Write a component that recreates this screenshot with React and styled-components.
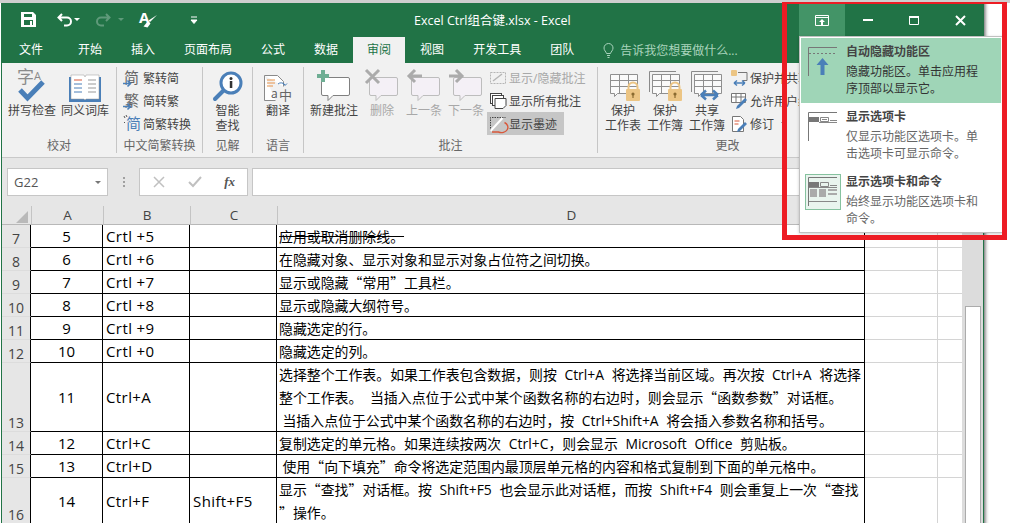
import React from "react";
import styled, { createGlobalStyle } from "styled-components";

const UI_FONT = `"Open Sans", "Noto Sans CJK SC", sans-serif`;
const GREEN = "#217346";
const BLUE = "#4a7fb8";

const tabs = ["开始", "插入", "页面布局", "公式", "数据", "审阅", "视图", "开发工具", "团队"];

const rows = [
  { no: 7, a: "5", b: "Crtl +5", d: ["应用或取消删除线。"], strike: true },
  { no: 8, a: "6", b: "Crtl +6", d: ["在隐藏对象、显示对象和显示对象占位符之间切换。"] },
  { no: 9, a: "7", b: "Crtl +7", d: ["显示或隐藏“常用”工具栏。"] },
  { no: 10, a: "8", b: "Crtl +8", d: ["显示或隐藏大纲符号。"] },
  { no: 11, a: "9", b: "Crtl +9", d: ["隐藏选定的行。"] },
  { no: 12, a: "10", b: "Crtl +0", d: ["隐藏选定的列。"] },
  {
    no: 13,
    a: "11",
    b: "Ctrl+A",
    d: [
      "选择整个工作表。如果工作表包含数据，则按 Ctrl+A 将选择当前区域。再次按 Ctrl+A 将选择",
      "整个工作表。 当插入点位于公式中某个函数名称的右边时，则会显示“函数参数”对话框。",
      "\u2005当插入点位于公式中某个函数名称的右边时，按 Ctrl+Shift+A 将会插入参数名称和括号。",
    ],
  },
  { no: 14, a: "12", b: "Ctrl+C", d: ["复制选定的单元格。如果连续按两次 Ctrl+C，则会显示 Microsoft Office 剪贴板。"] },
  { no: 15, a: "13", b: "Ctrl+D", d: ["\u2005使用“向下填充”命令将选定范围内最顶层单元格的内容和格式复制到下面的单元格中。"] },
  {
    no: 16,
    a: "14",
    b: "Ctrl+F",
    c: "Shift+F5",
    d: ["显示“查找”对话框。按 Shift+F5 也会显示此对话框，而按 Shift+F4 则会重复上一次“查找", "”操作。"],
  },
];

// curly quotes are full width in the sheet, Open Sans would draw them narrow
const withQuotes = (line) =>
  line.split(/([“”])/).map((part, i) => (part === "“" || part === "”" ? <Quote key={i}>{part}</Quote> : part));

const Bubble = ({ fill, stroke, children }) => (
  <svg width="36" height="34" viewBox="0 0 36 34">
    <path
      d="M7 9.5h25a1.5 1.5 0 0 1 1.5 1.5v15a1.5 1.5 0 0 1-1.5 1.5H17l-5 5v-5H7A1.5 1.5 0 0 1 5.5 26V11A1.5 1.5 0 0 1 7 9.5z"
      fill={fill}
      stroke={stroke}
      strokeWidth="1"
    />
    {children}
  </svg>
);

const Sheet3 = ({ children, back }) => (
  <svg width="38" height="34" viewBox="0 0 38 34">
    {back && <path d="M3.5 24V3.5H30" fill="none" stroke="#8a8a8a" />}
    <path
      d="M6.5 6.5h27v19h-20l-3 3v-3h-4zM6.5 12.5h27M6.5 18.5h27M15.5 6.5v19M24.5 6.5v19"
      fill="#fafafa"
      stroke="#8f8f8f"
    />
    {children}
  </svg>
);

const Lock = () => (
  <g>
    <path d="M24.5 22v-3a4.5 4.5 0 0 1 9 0v3" fill="none" stroke="#ecc584" strokeWidth="2" />
    <rect x="22" y="21" width="14" height="12" rx="1" fill="#ecc584" />
    <circle cx="29" cy="26" r="1.6" fill="#8a6a30" />
    <rect x="28.4" y="26" width="1.2" height="4" fill="#8a6a30" />
  </g>
);

const RibbonGlyph = ({ ch, color, arrow, left }) => (
  <svg width="18" height="20" viewBox="0 0 18 20">
    <text x={left ? 3 : 1} y="15" fontSize="15" fill={color} fontFamily="Noto Sans CJK SC">
      {ch}
    </text>
    {arrow && <path d="M0 15.5h7M4.5 12.5l3 3-3 3" fill="none" stroke={BLUE} strokeWidth="1.6" />}
    {left && <path d="M1 2l1 2M3 1l1 2M1 8l1 1" stroke="#555" strokeWidth="1" />}
  </svg>
);

const CommentSmall = ({ kind }) => (
  <svg width="18" height="18" viewBox="0 0 18 18">
    {kind === "toggle" && (
      <g fill="none">
        <rect x="1.5" y="3.5" width="15" height="11" stroke="#b5b5b5" strokeDasharray="2 1" />
        <path d="M4 12l9-7" stroke="#b5b5b5" strokeWidth="1.4" />
      </g>
    )}
    {kind === "all" && (
      <g fill="#fff" stroke="#444">
        <rect x="1.5" y="1.5" width="11" height="10" />
        <rect x="3.5" y="3.5" width="11" height="10" />
        <path d="M6 6.5h11v7l-3 3H6z" />
      </g>
    )}
    {kind === "ink" && (
      <g fill="none">
        <path d="M1.5 16V2.5h15" stroke="#444" strokeDasharray="1.5 1" />
        <path d="M1.5 16l12-13" stroke="#fff" strokeWidth="2" />
        <path d="M15.5 7.5a6 5 0 1 1-6 9.5H3" stroke="#d9583b" strokeWidth="1.4" />
      </g>
    )}
  </svg>
);

const App = () => (
  <Page>
    <GlobalStyle />
    <TopStrip />
    <Body>
      <Window>
        <TitleBar>
          <Qat>
            <QatSlot $w={27} $ml={13}>
              <svg width="15" height="15" viewBox="0 0 15 15">
                <path d="M0 0h12l3 3v12H0z" fill="#fff" />
                <rect x="3" y="2" width="8" height="3" fill={GREEN} />
                <rect x="3" y="8" width="9" height="5" fill={GREEN} />
                <rect x="9" y="9" width="2" height="4" fill="#fff" />
              </svg>
            </QatSlot>
            <QatSlot $w={16} $ml={15}>
              <svg width="16" height="14" viewBox="0 0 16 14">
                <path d="M5 1L1.5 4.5 5 8M2 4.5h8a4 4 0 0 1 0 8H7" fill="none" stroke="#fff" strokeWidth="2" />
              </svg>
            </QatSlot>
            <Caret $color="#fff" $ml={1} />
            <QatSlot $w={16} $ml={15}>
              <svg width="16" height="14" viewBox="0 0 16 14">
                <path d="M11 1l3.5 3.5L11 8M14 4.5H6a4 4 0 0 0 0 8h3" fill="none" stroke="#5f9a7a" strokeWidth="2" />
              </svg>
            </QatSlot>
            <Caret $color="#5f9a7a" $ml={7} />
            <QatSlot $w={18} $ml={15}>
              <svg width="18" height="17" viewBox="0 0 18 17">
                <text x="0" y="12" fontSize="15" fontWeight="bold" fill="#fff" fontFamily="Open Sans">
                  A
                </text>
                <path d="M18 4l-7 7-1.500-1.500z" fill="#fff" />
                <path d="M9 10l2.500 2.500-3 4-4-1z" fill="#fff" />
              </svg>
            </QatSlot>
            <QatSlot $w={8} $ml={33}>
              <svg width="8" height="8" viewBox="0 0 8 8">
                <path d="M1 1h6M1 4h6L4 7.5z" fill="#fff" stroke="#fff" />
              </svg>
            </QatSlot>
          </Qat>
          <WindowButtons>
            <WinButton $active>
              <svg width="14" height="11" viewBox="0 0 14 11">
                <path d="M.5 .5h13v10H.5zM.5 2.5h13" fill="none" stroke="#fff" />
                <path d="M7 4l-3 3h2v3h2V7h2z" fill="#fff" />
              </svg>
            </WinButton>
            <WinButton>
              <svg width="10" height="2" viewBox="0 0 10 2">
                <rect width="10" height="2" fill="#fff" />
              </svg>
            </WinButton>
            <WinButton>
              <svg width="10" height="9" viewBox="0 0 10 9">
                <path d="M.5 .5h9v8h-9z" fill="none" stroke="#fff" />
                <rect width="10" height="2" fill="#fff" />
              </svg>
            </WinButton>
            <WinButton>
              <svg width="11" height="11" viewBox="0 0 11 11">
                <path d="M1 1l9 9M10 1l-9 9" stroke="#fff" strokeWidth="2" />
              </svg>
            </WinButton>
          </WindowButtons>
          <Title>Excel Ctrl组合键.xlsx - Excel</Title>
        </TitleBar>

        <TabBar>
          <FileTab>文件</FileTab>
          {tabs.map((tab) => (
            <Tab key={tab} $active={tab === "审阅"}>
              {tab}
            </Tab>
          ))}
          <TellMe>
            <svg width="11" height="15" viewBox="0 0 11 15">
              <path
                d="M3.5 10.5C3 8.5 1 7.500 1 5a4.500 4.500 0 0 1 9 0c0 2.500-2 3.500-2.500 5.500zM4 12.500h3M4.500 14.500h2"
                fill="none"
                stroke="#a9d3bc"
              />
            </svg>
            告诉我您想要做什么...
          </TellMe>
        </TabBar>

        <Ribbon>
          <Group $w={115}>
            <GroupBody $pl={2}>
              <BigButton $w={56}>
                <IconBox>
                  <svg width="30" height="34" viewBox="0 0 30 34">
                    <text x="0" y="15" fontSize="17" fill="#8a8a8a" fontFamily="Noto Sans CJK SC">
                      字
                    </text>
                    <text x="17" y="12" fontSize="11" fill="#8a8a8a" fontFamily="Open Sans">
                      A
                    </text>
                    <path d="M3 22l7.500 8L26 14" fill="none" stroke={BLUE} strokeWidth="5" />
                  </svg>
                </IconBox>
                <Label>拼写检查</Label>
              </BigButton>
              <BigButton $w={50}>
                <IconBox>
                  <svg width="32" height="30" viewBox="0 0 32 30">
                    <path d="M0 5h32v25H0z" fill={BLUE} />
                    <path d="M2 3h13l1 2 1-2h13v24H17l-1 1-1-1H2z" fill="#fff" stroke="#999" strokeWidth=".5" />
                    <path d="M5 8h8" stroke="#d9583b" />
                    <path d="M5 12h8M5 16h8M5 20h8" stroke={BLUE} />
                    <path d="M19 8h8M19 12h8M19 16h8M19 20h8" stroke="#999" />
                  </svg>
                </IconBox>
                <Label>同义词库</Label>
              </BigButton>
            </GroupBody>
            <GroupName>校对</GroupName>
          </Group>

          <Group $w={86}>
            <SmallColumn $pl={4}>
              <SmallRow>
                <RibbonGlyph ch="简" color="#666" arrow />
                繁转简
              </SmallRow>
              <SmallRow>
                <RibbonGlyph ch="繁" color="#666" arrow />
                简转繁
              </SmallRow>
              <SmallRow>
                <RibbonGlyph ch="简" color={BLUE} left />
                简繁转换
              </SmallRow>
            </SmallColumn>
            <GroupName>中文简繁转换</GroupName>
          </Group>

          <Group $w={50}>
            <GroupBody>
              <BigButton $w={49}>
                <IconBox>
                  <svg width="32" height="32" viewBox="0 0 32 32">
                    <circle cx="19" cy="13" r="10" fill="#fff" stroke={BLUE} strokeWidth="3" />
                    <path d="M11 21L3 29" stroke={BLUE} strokeWidth="4" strokeLinecap="round" />
                    <circle cx="19" cy="8.500" r="1.500" fill="#333" />
                    <rect x="17.800" y="11" width="2.500" height="7" fill="#333" />
                  </svg>
                </IconBox>
                <Label>智能</Label>
                <Label>查找</Label>
              </BigButton>
            </GroupBody>
            <GroupName>见解</GroupName>
          </Group>

          <Group $w={51}>
            <GroupBody>
              <BigButton $w={50}>
                <IconBox>
                  <svg width="30" height="32" viewBox="0 0 30 32">
                    <path d="M1.500 5.500h13l6 6v5M1.500 5.500v25h11" fill="#fff" stroke="#8a8a8a" />
                    <path d="M4 10h8M4 13h8M4 16h6" stroke="#e8934a" />
                    <path d="M15 14a4 3 0 0 1 7 1M20 13.500l2 2 2-2" fill="none" stroke={BLUE} />
                    <text x="8" y="28" fontSize="12" fill="#555" fontFamily="Open Sans">
                      a
                    </text>
                    <text x="16" y="30" fontSize="13" fill="#666" fontFamily="Noto Sans CJK SC">
                      中
                    </text>
                  </svg>
                </IconBox>
                <Label>翻译</Label>
              </BigButton>
            </GroupBody>
            <GroupName>语言</GroupName>
          </Group>

          <Group $w={294}>
            <GroupBody $pl={3}>
              <BigButton $w={54}>
                <IconBox>
                  <Bubble fill="#fff" stroke="#808080">
                    <path d="M7 2v12M1 8h12" stroke="#6fae94" strokeWidth="4" />
                  </Bubble>
                </IconBox>
                <Label>新建批注</Label>
              </BigButton>
              <BigButton $w={42}>
                <IconBox>
                  <Bubble fill="#f4f0f6" stroke="#bdbdbd">
                    <path d="M2 2l13 13M15 2L2 15" stroke="#ababab" strokeWidth="3" />
                  </Bubble>
                </IconBox>
                <Label $muted>删除</Label>
              </BigButton>
              <BigButton $w={42}>
                <IconBox>
                  <Bubble fill="#f4f0f6" stroke="#bdbdbd">
                    <path d="M16 8H4M9 2L3 8l6 6" fill="none" stroke="#ababab" strokeWidth="3" />
                  </Bubble>
                </IconBox>
                <Label $muted>上一条</Label>
              </BigButton>
              <BigButton $w={42}>
                <IconBox>
                  <Bubble fill="#f4f0f6" stroke="#bdbdbd">
                    <path d="M1 8h12M8 2l6 6-6 6" fill="none" stroke="#ababab" strokeWidth="3" />
                  </Bubble>
                </IconBox>
                <Label $muted>下一条</Label>
              </BigButton>
              <SmallColumn $pl={0}>
                <SmallRow $muted>
                  <CommentSmall kind="toggle" />
                  显示/隐藏批注
                </SmallRow>
                <SmallRow>
                  <CommentSmall kind="all" />
                  显示所有批注
                </SmallRow>
                <SmallRow $on>
                  <CommentSmall kind="ink" />
                  显示墨迹
                </SmallRow>
              </SmallColumn>
            </GroupBody>
            <GroupName>批注</GroupName>
          </Group>

          <Group $w={259} $last>
            <GroupBody $pl={4}>
              <BigButton $w={42}>
                <IconBox>
                  <Sheet3>
                    <Lock />
                  </Sheet3>
                </IconBox>
                <Label>保护</Label>
                <Label>工作表</Label>
              </BigButton>
              <BigButton $w={42}>
                <IconBox>
                  <Sheet3 back>
                    <Lock />
                  </Sheet3>
                </IconBox>
                <Label>保护</Label>
                <Label>工作簿</Label>
              </BigButton>
              <BigButton $w={42}>
                <IconBox>
                  <Sheet3 back>
                    <path d="M13 27h17M13 27l5-4.500M13 27l5 4.500M30 27l-5-4.500M30 27l-5 4.500" stroke={BLUE} strokeWidth="2.500" fill="none" />
                  </Sheet3>
                </IconBox>
                <Label>共享</Label>
                <Label>工作簿</Label>
              </BigButton>
              <SmallColumn $pl={0}>
                <SmallRow>
                  <svg width="18" height="18" viewBox="0 0 18 18">
                    <rect x="1" y="1" width="6" height="6" rx="1" fill="#ecc584" />
                    <path d="M8 3.500h9v8h-4" fill="none" stroke="#777" />
                    <path d="M4 14h11M4 14l3-2.500M4 14l3 2.500M15 14l-3-2.500M15 14l-3 2.500" stroke={BLUE} strokeWidth="1.500" fill="none" />
                  </svg>
                  保护并共享工作簿
                </SmallRow>
                <SmallRow>
                  <svg width="18" height="18" viewBox="0 0 18 18">
                    <path d="M1.500 1.500h14v9h-14zM1.500 5h14M6 1.500v9M11 1.500v9" fill="#fff" stroke="#777" />
                    <path d="M6 17l1-3 8-8 2 2-8 8z" fill={BLUE} />
                  </svg>
                  允许用户编辑区域
                </SmallRow>
                <SmallRow>
                  <svg width="18" height="18" viewBox="0 0 18 18">
                    <path d="M2.500 1.500h8l3 3v12h-11z" fill="#fff" stroke="#777" />
                    <path d="M4.500 6h5M4.500 9h4" stroke="#d9583b" />
                    <path d="M7 17l1-3 7-7 2 2-7 7z" fill={BLUE} />
                  </svg>
                  修订
                  <Caret $color="#666" $ml={5} />
                </SmallRow>
              </SmallColumn>
            </GroupBody>
            <GroupName>更改</GroupName>
          </Group>
        </Ribbon>

        <FormulaBar>
          <NameBox>
            G22
            <Caret $color="#777" $ml={0} />
          </NameBox>
          <Grip>
            <i />
            <i />
            <i />
          </Grip>
          <FormulaTools>
            <svg width="12" height="12" viewBox="0 0 12 12">
              <path d="M1 1l10 10M11 1L1 11" stroke="#c0c0c0" strokeWidth="1.500" />
            </svg>
            <svg width="14" height="12" viewBox="0 0 14 12">
              <path d="M1 6l4 4 8-9" fill="none" stroke="#c0c0c0" strokeWidth="2" />
            </svg>
            <FxMark>fx</FxMark>
          </FormulaTools>
          <FormulaInput />
        </FormulaBar>

        <SheetArea>
          <Grid>
            <Sheet>
              <colgroup>
                <col width="29" />
                <col width="72" />
                <col width="87" />
                <col width="87" />
                <col width="588" />
                <col width="73" />
                <col width="25" />
              </colgroup>
              <thead>
                <tr>
                  <Corner>
                    <Triangle />
                  </Corner>
                  {["A", "B", "C", "D", "", ""].map((col, i) => (
                    <ColHead key={i}>{col}</ColHead>
                  ))}
                </tr>
              </thead>
              <tbody>
                {rows.map((row) => (
                  <tr key={row.no}>
                    <RowHead>{row.no}</RowHead>
                    <NumCell>{row.a}</NumCell>
                    <KeyCell>{row.b}</KeyCell>
                    <KeyCell>{row.c}</KeyCell>
                    <TextCell $strike={row.strike}>
                      {row.d.map((line) => (
                        <div key={line}>{withQuotes(line)}</div>
                      ))}
                    </TextCell>
                    <EmptyCell />
                    <EmptyCell />
                  </tr>
                ))}
              </tbody>
            </Sheet>
          </Grid>
          <ScrollBar>
            <ScrollThumb />
          </ScrollBar>
        </SheetArea>
      </Window>
      <Desktop />
    </Body>

    <Menu>
      <MenuItem $on>
        <MenuIcon>
          <svg width="30" height="30" viewBox="0 0 30 30">
            <path d="M.5 29V.5H29" fill="none" stroke="#777" />
            <path d="M1 6.500h28" stroke="#777" strokeDasharray="2 2" />
            <path d="M14.500 11l-6 7h4v10h4V18h4z" fill={BLUE} />
          </svg>
        </MenuIcon>
        <MenuText>
          <MenuTitle>自动隐藏功能区</MenuTitle>
          <MenuDesc $on>
            隐藏功能区。单击应用程
            <br />
            序顶部以显示它。
          </MenuDesc>
        </MenuText>
      </MenuItem>
      <MenuItem>
        <MenuIcon>
          <svg width="30" height="30" viewBox="0 0 30 30">
            <path d="M.5 29V.5H29" fill="none" stroke="#777" />
            <rect x="1" y="5" width="10" height="5" fill="#777" />
            <path d="M12.500 5.500h8v4h-8zM22 8.500h7M14 7.500h5" fill="none" stroke="#888" />
            <path d="M11 10.500h18" stroke="#888" />
          </svg>
        </MenuIcon>
        <MenuText>
          <MenuTitle>显示选项卡</MenuTitle>
          <MenuDesc>
            仅显示功能区选项卡。单
            <br />
            击选项卡可显示命令。
          </MenuDesc>
        </MenuText>
      </MenuItem>
      <MenuItem>
        <MenuIcon $framed>
          <svg width="30" height="30" viewBox="0 0 30 30">
            <path d="M.5 29V.5H29" fill="none" stroke="#777" />
            <rect x="1" y="5" width="10" height="5" fill="#777" />
            <path d="M12.500 5.500h8v4h-8zM22 8.500h7M1 10.500h28M1 24.500h28" fill="none" stroke="#888" />
            <path d="M2 12h7v8H2zM11 12h7v8h-7zM20 12h9v2h-9zM20 16h9v2h-9z" fill="#aaa" />
          </svg>
        </MenuIcon>
        <MenuText>
          <MenuTitle>显示选项卡和命令</MenuTitle>
          <MenuDesc>
            始终显示功能区选项卡和
            <br />
            命令。
          </MenuDesc>
        </MenuText>
      </MenuItem>
    </Menu>
    <RedFrame />
  </Page>
);

const GlobalStyle = createGlobalStyle`
  html, body {
    margin: 0;
    padding: 0;
    overflow: hidden;
    background: #fff;
    font-family: ${UI_FONT};
  }
  svg {
    overflow: visible;
  }
`;

const Page = styled.div`
  position: relative;
  width: 1010px;
  height: 523px;
  overflow: hidden;
  display: flex;
  flex-direction: column;
`;

const TopStrip = styled.div`
  height: 3px;
  flex: none;
  background: #cfcfcf;
`;

const Body = styled.div`
  flex: 1;
  min-height: 0;
  display: flex;
  padding-left: 1px;
`;

const Window = styled.div`
  width: 983px;
  flex: none;
  box-sizing: border-box;
  display: flex;
  flex-direction: column;
  border-left: 1px solid ${GREEN};
  border-right: 1px solid ${GREEN};
  background: #fff;
`;

const Desktop = styled.div`
  flex: 1;
  background:
    linear-gradient(90deg, #8a8a8a, #e8e8e8 3px, #fff 5px) no-repeat 0 0 / 6px 100%,
    linear-gradient(#2f9c8c, #2f9c8c) no-repeat 2px 261px / 3px 6px,
    linear-gradient(#e8934a, #e8934a) no-repeat 3px 298px / 2px 5px,
    linear-gradient(#222, #222) no-repeat 1px 418px / 4px 14px,
    #fff;
`;

const TitleBar = styled.div`
  position: relative;
  height: 33px;
  flex: none;
  display: flex;
  align-items: stretch;
  justify-content: space-between;
  background: ${GREEN};
`;

const Qat = styled.div`
  display: flex;
  align-items: center;
`;

const QatSlot = styled.div`
  width: ${(p) => p.$w}px;
  margin-left: ${(p) => p.$ml}px;
  display: flex;
  justify-content: center;
`;

const Caret = styled.span`
  display: inline-block;
  width: 0;
  height: 0;
  margin-left: ${(p) => p.$ml}px;
  border-left: 3px solid transparent;
  border-right: 3px solid transparent;
  border-top: 3px solid ${(p) => p.$color};
`;

const Title = styled.div`
  position: absolute;
  left: 412px;
  top: 9px;
  font-size: 12.5px;
  line-height: 17px;
  color: #fff;
  white-space: nowrap;
`;

const WindowButtons = styled.div`
  display: flex;
  padding-top: 1px;
`;

const WinButton = styled.div`
  width: 46px;
  display: flex;
  align-items: center;
  justify-content: center;
  background: ${(p) => (p.$active ? "#439467" : "transparent")};
`;

const TabBar = styled.div`
  height: 27px;
  flex: none;
  display: flex;
  align-items: flex-end;
  gap: 1px;
  background: ${GREEN};
  font-size: 12px;
`;

const Tab = styled.div`
  height: 26px;
  padding: 0 14px;
  line-height: 25px;
  white-space: nowrap;
  color: ${(p) => (p.$active ? GREEN : "#fff")};
  background: ${(p) => (p.$active ? "#f1f1f1" : "transparent")};
`;

const FileTab = styled(Tab)`
  padding: 0 20px 0 17px;
`;

const TellMe = styled.div`
  height: 26px;
  margin-left: 14px;
  display: flex;
  align-items: center;
  gap: 6px;
  color: #a9d3bc;
  white-space: nowrap;
`;

const Ribbon = styled.div`
  height: 95px;
  flex: none;
  box-sizing: border-box;
  display: flex;
  padding-top: 4px;
  background: #f1f1f1;
  border-bottom: 1px solid #c9c9c9;
`;

const Group = styled.div`
  width: ${(p) => p.$w}px;
  height: 86px;
  flex: none;
  box-sizing: border-box;
  display: flex;
  flex-direction: column;
  border-right: ${(p) => (p.$last ? "none" : "1px solid #c6c6c6")};
`;

const GroupBody = styled.div`
  flex: 1;
  display: flex;
  padding-left: ${(p) => p.$pl || 0}px;
`;

const GroupName = styled.div`
  height: 16px;
  margin-bottom: -1px;
  font-size: 12px;
  line-height: 16px;
  text-align: center;
  color: #666;
  white-space: nowrap;
`;

const BigButton = styled.div`
  width: ${(p) => p.$w}px;
  flex: none;
  display: flex;
  flex-direction: column;
  align-items: center;
`;

const IconBox = styled.div`
  height: 35px;
  display: flex;
  align-items: flex-end;
  justify-content: center;
  margin-bottom: 1px;
`;

const Label = styled.div`
  font-size: 12px;
  line-height: 15px;
  white-space: nowrap;
  color: ${(p) => (p.$muted ? "#a8a8a8" : "#444")};
`;

const SmallColumn = styled.div`
  flex: 1;
  padding-left: ${(p) => p.$pl}px;
  margin-top: -1px;
  display: flex;
  flex-direction: column;
`;

const SmallRow = styled.div`
  height: 23px;
  align-self: flex-start;
  box-sizing: border-box;
  padding: 0 7px 0 2px;
  display: flex;
  align-items: center;
  gap: 2px;
  font-size: 12px;
  white-space: nowrap;
  color: ${(p) => (p.$muted ? "#a8a8a8" : "#444")};
  background: ${(p) => (p.$on ? "#c6c6c6" : "transparent")};
`;

const FormulaBar = styled.div`
  height: 48px;
  flex: none;
  box-sizing: border-box;
  display: flex;
  align-items: flex-start;
  padding: 10px 0 0 5px;
  background: #e6e6e6;
`;

const NameBox = styled.div`
  width: 101px;
  height: 28px;
  box-sizing: border-box;
  padding: 0 6px;
  display: flex;
  align-items: center;
  justify-content: space-between;
  background: #fff;
  border: 1px solid #c6c6c6;
  font-size: 13px;
  color: #555;
`;

const Grip = styled.div`
  width: 31px;
  height: 28px;
  display: flex;
  flex-direction: column;
  align-items: center;
  justify-content: center;
  gap: 2px;
  i {
    width: 2px;
    height: 2px;
    background: #a0a0a0;
  }
`;

const FormulaTools = styled.div`
  width: 109px;
  height: 28px;
  box-sizing: border-box;
  padding: 0 12px 0 13px;
  display: flex;
  align-items: center;
  justify-content: space-between;
  background: #fff;
  border: 1px solid #c6c6c6;
`;

const FxMark = styled.span`
  font-family: "Liberation Serif", serif;
  font-style: italic;
  font-weight: bold;
  font-size: 13px;
  color: #555;
`;

const FormulaInput = styled.div`
  flex: 1;
  height: 28px;
  margin-left: 4px;
  box-sizing: border-box;
  background: #fff;
  border: 1px solid #c6c6c6;
`;

const SheetArea = styled.div`
  flex: 1;
  min-height: 0;
  display: flex;
  overflow: hidden;
`;

const Grid = styled.div`
  width: 960px;
  flex: none;
`;

const Sheet = styled.table`
  width: 961px;
  table-layout: fixed;
  border-collapse: separate;
  border-spacing: 0;
  background: #fff;
  color: #000;
  td, th {
    box-sizing: border-box;
    padding: 0;
    font-weight: normal;
  }
`;

const Corner = styled.th`
  position: relative;
  height: 19px;
  background: #e6e6e6;
  border-bottom: 1px solid #b8b8b8;
`;

const Triangle = styled.span`
  position: absolute;
  right: 3px;
  bottom: 1px;
  width: 12px;
  height: 12px;
  background: #b9b9b9;
  clip-path: polygon(100% 0, 100% 100%, 0 100%);
`;

const ColHead = styled.th`
  height: 19px;
  background: #e6e6e6;
  border-left: 1px solid #c4c4c4;
  border-bottom: 1px solid #b8b8b8;
  font-size: 13.5px;
  line-height: 17px;
  color: #444;
  text-align: center;
`;

const RowHead = styled.td`
  height: 23px;
  background: #e6e6e6;
  border-bottom: 1px solid #dcdcdc;
  border-right: 1px solid #000;
  font-size: 14px;
  line-height: 17px;
  color: #444;
  text-align: center;
  vertical-align: bottom;
`;

const NumCell = styled.td`
  border-right: 1px solid #000;
  border-bottom: 1px solid #000;
  font-size: 15px;
  line-height: 20px;
  text-align: center;
`;

const KeyCell = styled.td`
  padding-left: 3px !important;
  border-right: 1px solid #000;
  border-bottom: 1px solid #000;
  font-size: 15px;
  line-height: 20px;
  letter-spacing: 0.4px;
  white-space: nowrap;
`;

const TextCell = styled.td`
  padding-left: 2px !important;
  border-right: 1px solid #000;
  border-bottom: 1px solid #000;
  font-size: 13.9px;
  line-height: 23px;
  word-spacing: 4px;
  white-space: pre;
  overflow: hidden;
  text-decoration: ${(p) => (p.$strike ? "line-through" : "none")};
  div:last-child {
    margin-bottom: -1px;
  }
`;

const Quote = styled.span`
  font-family: "Noto Sans CJK SC", sans-serif;
`;

const EmptyCell = styled.td`
  border-right: 1px solid #d4d4d4;
  border-bottom: 1px solid #d4d4d4;
`;

const ScrollBar = styled.div`
  flex: 1;
  padding: 100px 2px 0 3px;
  background: #dcdcdc;
`;

const ScrollThumb = styled.div`
  height: 400px;
  background: #fff;
  border: 1px solid #ababab;
`;

const Menu = styled.div`
  position: absolute;
  left: 799px;
  top: 36px;
  z-index: 2;
  width: 204px;
  height: 197px;
  box-sizing: border-box;
  padding: 1px;
  background: #fff;
  border: 1px solid #c0c0c0;
  box-shadow: 0 1px 3px rgba(0, 0, 0, 0.2);
`;

const MenuItem = styled.div`
  height: 65px;
  display: flex;
  background: ${(p) => (p.$on ? "#9fd5b7" : "transparent")};
`;

const MenuIcon = styled.div`
  width: 36px;
  height: 36px;
  margin: 6px 5px 0 4px;
  flex: none;
  box-sizing: border-box;
  display: flex;
  align-items: center;
  justify-content: center;
  background: ${(p) => (p.$framed ? "#e9f4ee" : "transparent")};
  border: 1px solid ${(p) => (p.$framed ? "#86c29f" : "transparent")};
`;

const MenuText = styled.div`
  padding-top: 5px;
  min-width: 0;
`;

const MenuTitle = styled.div`
  font-size: 12px;
  line-height: 17px;
  font-weight: bold;
  color: #444;
  white-space: nowrap;
`;

const MenuDesc = styled.div`
  margin-top: 3px;
  font-size: 12px;
  line-height: 17px;
  color: ${(p) => (p.$on ? "#333" : "#666")};
  white-space: nowrap;
`;

const RedFrame = styled.div`
  position: absolute;
  left: 782px;
  top: 2px;
  z-index: 3;
  width: 225px;
  height: 238px;
  box-sizing: border-box;
  border: 5px solid #ed1c24;
  border-top-width: 2px;
  pointer-events: none;
`;

export default App;
